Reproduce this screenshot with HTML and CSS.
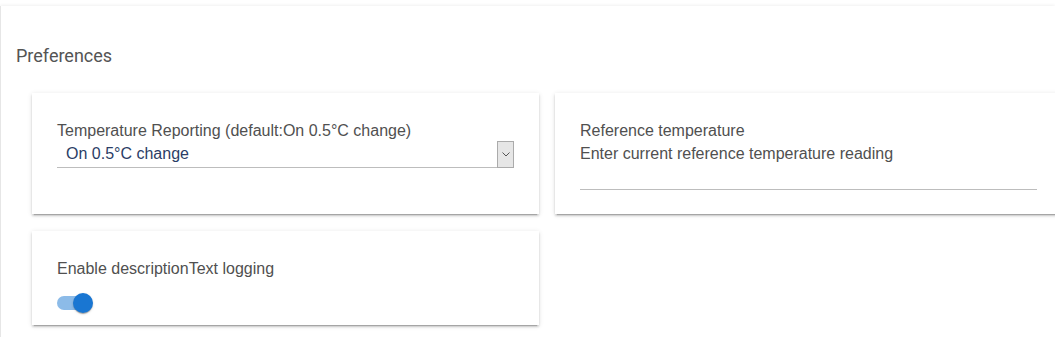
FILE: index.html
```html
<!DOCTYPE html>
<html lang="en">
<head>
    <meta charset="UTF-8">
    <meta name="viewport" content="width=device-width, initial-scale=1.0">
    <title>Device Preferences</title>
    <link rel="stylesheet" href="styles.css">
</head>
<body>
    <div class="panel">
        <h2 class="panel-title">Preferences</h2>

        <div class="pref-grid">
            <div class="pref-card">
                <label class="pref-label" for="tempReporting">Temperature Reporting (default:On 0.5°C change)</label>
                <div class="select-wrap">
                    <select class="pref-select" id="tempReporting">
                        <option>On 0.5°C change</option>
                        <option>On 1°C change</option>
                        <option>On 2°C change</option>
                    </select>
                    <span class="select-btn">
                        <svg width="8" height="5" viewBox="0 0 8 5">
                            <path d="M0.5 0.5 L4 4 L7.5 0.5" fill="none" stroke="#555" stroke-width="1"/>
                        </svg>
                    </span>
                </div>
            </div>

            <div class="pref-card">
                <label class="pref-label" for="refTemp">Reference temperature</label>
                <div class="pref-label">Enter current reference temperature reading</div>
                <input class="pref-input" id="refTemp" type="text">
            </div>

            <div class="pref-card">
                <div class="pref-label">Enable descriptionText logging</div>
                <label class="switch">
                    <input type="checkbox" checked>
                    <span class="switch-track"></span>
                    <span class="switch-thumb"></span>
                </label>
            </div>
        </div>
    </div>
</body>
</html>
```

FILE: styles.css
```css
:root {
    --text-color: #505050;
    --select-text: #2b3d66;
    --line-color: #bdbdbd;
    --primary-color: #1976d2;
}

* {
    margin: 0;
    padding: 0;
    box-sizing: border-box;
}

html, body {
    height: 100%;
}

body {
    background: white;
    overflow: hidden;
    font-family: "Liberation Sans", Arial, sans-serif;
    color: var(--text-color);
}

.panel {
    height: calc(100% - 6px);
    margin-top: 6px;
    border-left: 1px solid #e6e6e6;
    box-shadow: 0 -1px 3px rgba(0, 0, 0, 0.06);
    padding-top: 38px;
    overflow: hidden;
}

.panel-title {
    font-family: Roboto, sans-serif;
    font-weight: 400;
    font-size: 18px;
    line-height: 24px;
    color: #545454;
    padding-left: 15px;
}

.pref-grid {
    display: grid;
    grid-template-columns: 507px 507px;
    column-gap: 16px;
    row-gap: 17px;
    margin: 25px 0 0 31px;
}

.pref-card {
    background: white;
    padding: 26px 25px 24px;
    box-shadow: 0 3px 1px -2px rgba(0, 0, 0, 0.2),
                0 2px 2px 0 rgba(0, 0, 0, 0.14),
                0 1px 5px 0 rgba(0, 0, 0, 0.12);
}

.pref-label {
    display: block;
    font-size: 16px;
    line-height: 23px;
}

.select-wrap {
    display: flex;
    height: 27px;
    margin-top: -1px;
}

.pref-select {
    flex: 1;
    appearance: none;
    -webkit-appearance: none;
    border: none;
    border-bottom: 1px solid var(--line-color);
    background: transparent;
    font-family: "Liberation Sans", Arial, sans-serif;
    font-size: 16px;
    line-height: 26px;
    color: var(--select-text);
    padding: 0 9px;
    outline: none;
}

.select-btn {
    width: 17px;
    height: 27px;
    background: #e6e6e6;
    border: 1px solid #ababab;
    display: flex;
    align-items: center;
    justify-content: center;
}

.pref-input {
    display: block;
    width: 100%;
    height: 25px;
    border: none;
    border-bottom: 1px solid var(--line-color);
    outline: none;
    font-family: "Liberation Sans", Arial, sans-serif;
    font-size: 16px;
}

.switch {
    display: block;
    position: relative;
    width: 36px;
    height: 20px;
    margin-top: 13px;
    margin-bottom: -12px;
    cursor: pointer;
}

.switch input {
    display: none;
}

.switch-track {
    position: absolute;
    left: 0;
    top: 3px;
    width: 34px;
    height: 14px;
    border-radius: 7px;
    background: #8cbbe8;
}

.switch-thumb {
    position: absolute;
    left: 16px;
    top: 0;
    width: 20px;
    height: 20px;
    border-radius: 50%;
    background: var(--primary-color);
    box-shadow: 0 2px 1px -1px rgba(0, 0, 0, 0.2),
                0 1px 1px 0 rgba(0, 0, 0, 0.14),
                0 1px 3px 0 rgba(0, 0, 0, 0.12);
}
```
